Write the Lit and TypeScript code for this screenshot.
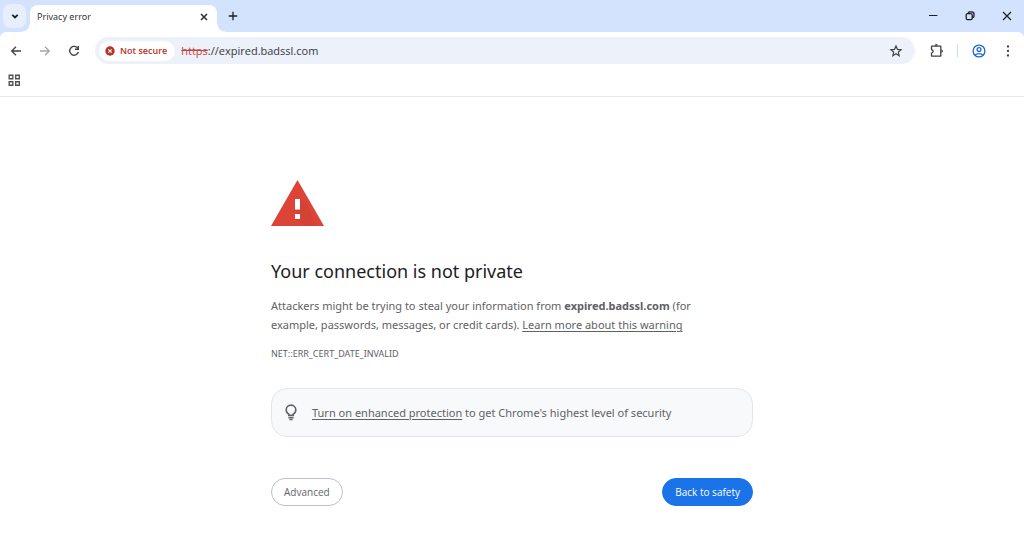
import { LitElement, html, css, svg } from "lit";
import { customElement, property, state } from "lit/decorators.js";

const stroke = (size: number, body: unknown) => html`
  <svg width=${size} height=${size} viewBox="0 0 ${size} ${size}" fill="none" stroke="currentColor" stroke-width="1.5" aria-hidden="true">${body}</svg>
`;

const icons = {
  chevron: stroke(16, svg`<path d="M5.300 6.800 8 9.500l2.700-2.700" stroke-width="1.800"/>`),
  close: stroke(16, svg`<path d="m5 5 6 6m0-6-6 6" stroke-width="1.600"/>`),
  plus: stroke(16, svg`<path d="M8 3.800v8.400M3.800 8h8.400" stroke-width="1.300"/>`),
  minimize: stroke(16, svg`<path d="M4 7.500h8.400" stroke-width="1"/>`),
  restore: stroke(16, svg`<rect x="4.200" y="5.600" width="6" height="6" rx="1.400" stroke-width="1.300"/><path d="M6.200 5.400c0-1 .6-1.600 1.600-1.600h2c1.400 0 2.200.8 2.200 2.200v2c0 1-.6 1.600-1.600 1.600" stroke-width="1.300"/>`),
  closeWindow: stroke(16, svg`<path d="m4 4 8 8m0-8-8 8" stroke-width="1.200"/>`),
  back: stroke(16, svg`<path d="M13 8H4M8 3.700 3.700 8 8 12.300" stroke-width="1.300"/>`),
  forward: stroke(16, svg`<path d="M3 8h9M8 3.700 12.300 8 8 12.300" stroke-width="1.300"/>`),
  reload: stroke(16, svg`<path d="M11.900 5.600A4.400 4.400 0 1 0 12.300 9" stroke-width="1.400"/><path d="M12.300 3v3.300H9" stroke-width="1.400"/>`),
  star: stroke(16, svg`<path d="m8 3 1.450 3.350 3.650.33-2.770 2.400.83 3.560L8 10.750l-3.160 1.890.83-3.560L2.900 6.680l3.650-.33Z" stroke-width="1.200"/>`),
  puzzle: stroke(16, svg`<path d="M3.500 3.200h9.300v9.900H3.500v-3c2.200-.5 2.200-3 0-3.500Z" stroke-width="1.300" stroke-linejoin="round"/><path d="M6.700 2.700a1.600 1.600 0 0 1 3.200 0ZM13.300 6.500a1.600 1.600 0 0 1 0 3.200Z" fill="currentColor" stroke="none"/>`),
  profile: stroke(16, svg`<circle cx="8" cy="8" r="5.900" stroke-width="1.300"/><circle cx="8" cy="6.500" r="1.900" stroke-width="1.300"/><path d="M4 12.200c2.200-2.200 5.800-2.200 8 0" stroke-width="1.300"/>`),
  menu: stroke(16, svg`<g fill="currentColor" stroke="none"><circle cx="8" cy="3.500" r="1.150"/><circle cx="8" cy="8" r="1.150"/><circle cx="8" cy="12.500" r="1.150"/></g>`),
  grid: stroke(16, svg`<path d="M3.200 2.200h3.600v3.600H3.200ZM9.700 2.200h3.600v3.600H9.700ZM3.200 8.700h3.600v3.600H3.200ZM9.700 8.700h3.600v3.600H9.700Z" stroke-width="1.400"/>`),
  unsafe: stroke(10, svg`<circle cx="5" cy="5" r="4.700" fill="currentColor" stroke="none"/><path d="m3.300 3.300 3.400 3.400m0-3.400L3.300 6.700" stroke="#fff" stroke-width="1.100"/>`),
  bulb: stroke(18, svg`<path d="M6.800 11.400v-1.300C5.200 9.200 4.200 7.700 4.200 5.900a4.800 4.800 0 0 1 9.600 0c0 1.800-1 3.300-2.600 4.200v1.300Z" stroke-width="1.600"/><path d="M6.400 13.800h5.200M7.400 15.600h3.200" stroke-width="1.400"/>`),
};

@customElement("icon-button")
class IconButton extends LitElement {
  @property() label = "";
  @property() icon: keyof typeof icons = "close";
  @property({ type: Boolean }) disabled = false;

  static styles = css`
    :host {
      display: inline-flex;
    }
    .button {
      display: grid;
      place-items: center;
      width: 100%;
      min-width: 16px;
      padding: 4px 0;
      border: 0;
      border-radius: inherit;
      background: none;
      color: inherit;
    }
    svg {
      display: block;
    }
  `;

  render() {
    return html`<button class="button" aria-label=${this.label} ?disabled=${this.disabled}>${icons[this.icon]}</button>`;
  }
}

@customElement("browser-chrome")
class BrowserChrome extends LitElement {
  static styles = css`
    :host {
      display: block;
      color: #1f1f1f;
      background: #d3e2fd;
    }
    .strip {
      display: flex;
      align-items: center;
      height: 32px;
      padding: 0 5px 0 3px;
    }
    .search {
      width: 23px;
      border-radius: 8px;
      background: #e7effd;
    }
    .tab {
      position: relative;
      align-self: flex-end;
      box-sizing: border-box;
      display: flex;
      align-items: center;
      justify-content: space-between;
      width: 187px;
      height: 27px;
      margin: 0 8px 0 4px;
      padding: 0 5px 4px 7px;
      border-radius: 8px 8px 0 0;
      background: #fff;
      color: #333;
      font: 9px/16px var(--text-font);
    }
    .tab::before,
    .tab::after {
      content: "";
      position: absolute;
      bottom: 0;
      width: 8px;
      height: 8px;
    }
    .tab::before {
      right: 100%;
      background: radial-gradient(circle at 0 0, transparent 7px, #fff 8px);
    }
    .tab::after {
      left: 100%;
      background: radial-gradient(circle at 100% 0, transparent 7px, #fff 8px);
    }
    .window {
      display: flex;
      gap: 21px;
      margin-left: auto;
      padding-right: 4px;
    }
    .toolbar {
      display: flex;
      align-items: center;
      gap: 13px;
      padding: 5px 8px;
      border-radius: 6px 6px 0 0;
      background: #fff;
      color: #404245;
    }
    .off {
      color: #a5a6a8;
    }
    .address {
      flex: 1;
      display: flex;
      align-items: center;
      box-sizing: border-box;
      height: 27px;
      padding: 0 11px 0 4px;
      border-radius: 14px;
      background: #ecf1fa;
    }
    .security {
      display: flex;
      align-items: center;
      gap: 5px;
      height: 20px;
      margin-right: 6px;
      padding: 0 8px 0 6px;
      border: 0;
      border-radius: 10px;
      background: #fff;
      color: #b93228;
      font: 600 9px/20px var(--ui-font);
    }
    .url {
      flex: 1;
      display: flex;
      align-items: center;
      font-size: 11px;
      line-height: 16px;
    }
    .scheme {
      color: #c7463c;
    }
    .input {
      flex: 1;
      min-width: 0;
      padding: 0;
      border: 0;
      outline: 0;
      background: none;
      color: #36383b;
      font: inherit;
    }
    .extensions {
      display: flex;
      align-items: center;
      gap: 13px;
    }
    .divider {
      width: 1px;
      height: 13px;
      background: #c9dbfa;
    }
    .profile {
      color: #1b66d2;
    }
    .bookmarks {
      display: flex;
      padding: 0 6px 3px;
      border-bottom: 1px solid #e6e8eb;
      background: #fff;
      color: #505255;
    }
  `;

  render() {
    return html`
      <div class="strip">
        <icon-button class="search" icon="chevron" label="Search tabs"></icon-button>
        <div class="tab">
          <span>Privacy error</span>
          <icon-button icon="close" label="Close tab"></icon-button>
        </div>
        <icon-button icon="plus" label="New tab"></icon-button>
        <div class="window">
          <icon-button icon="minimize" label="Minimize"></icon-button>
          <icon-button icon="restore" label="Restore"></icon-button>
          <icon-button icon="closeWindow" label="Close window"></icon-button>
        </div>
      </div>
      <div class="toolbar">
        <icon-button icon="back" label="Back"></icon-button>
        <icon-button class="off" icon="forward" label="Forward" disabled></icon-button>
        <icon-button icon="reload" label="Reload"></icon-button>
        <div class="address">
          <button class="security">${icons.unsafe}Not secure</button>
          <label class="url">
            <s class="scheme">https</s>
            <input class="input" aria-label="Address" value="://expired.badssl.com" />
          </label>
          <icon-button icon="star" label="Bookmark this page"></icon-button>
        </div>
        <div class="extensions">
          <icon-button icon="puzzle" label="Extensions"></icon-button>
          <span class="divider"></span>
          <icon-button class="profile" icon="profile" label="Profile"></icon-button>
          <icon-button icon="menu" label="Menu"></icon-button>
        </div>
      </div>
      <nav class="bookmarks">
        <icon-button icon="grid" label="Apps"></icon-button>
      </nav>
    `;
  }
}

@customElement("privacy-warning")
class PrivacyWarning extends LitElement {
  @state() private host = "expired.badssl.com";

  static styles = css`
    :host {
      display: block;
      box-sizing: border-box;
      width: 100%;
      max-width: 514px;
      margin: 0 auto;
      padding: 83px 16px 40px;
      color: #5f6164;
      font: 11px/19px var(--text-font);
    }
    .sign {
      display: block;
      margin-bottom: 32px;
    }
    .title {
      margin: 0 0 12px;
      color: #202124;
      font-size: 18px;
      font-weight: 400;
      line-height: 26px;
    }
    .text {
      margin: 0 0 10px;
      padding-right: 32px;
    }
    .link {
      color: inherit;
      text-underline-offset: 2px;
    }
    .code {
      font-size: 9px;
    }
    .tip {
      display: flex;
      align-items: center;
      gap: 12px;
      margin: 25px 0 41px;
      padding: 14px 10px;
      border: 1px solid #e4e6ea;
      border-radius: 16px;
      background: #f8f9fb;
    }
    .tip p {
      margin: 0;
    }
    .actions {
      display: flex;
      justify-content: space-between;
    }
    .button {
      padding: 0 12px;
      border: 1px solid #c0c1cb;
      border-radius: 14px;
      background: #fff;
      color: #646669;
      font: 10px/26px var(--ui-font);
    }
    .primary {
      border-color: #1a73e8;
      background: #1a73e8;
      color: #fff;
    }
  `;

  render() {
    return html`
      <svg class="sign" width="53" height="46" viewBox="0 0 53 46" aria-hidden="true">
        <path d="M26.500 0 53 46H0Z" fill="#db4437" />
        <path d="m29 19 9 9 6 18H34l-10-7 5-9Z" fill="#b93a30" opacity=".25" />
        <path d="M24 19h5v10.500h-5ZM24 34h5v5h-5Z" fill="#fff" />
      </svg>
      <h1 class="title">Your connection is not private</h1>
      <p class="text">
        Attackers might be trying to steal your information from <strong>${this.host}</strong> (for
        example, passwords, messages, or credit cards). <a class="link" href="#learn">Learn more about this warning</a>
      </p>
      <div class="code">NET::ERR_CERT_DATE_INVALID</div>
      <div class="tip">
        ${icons.bulb}
        <p><a class="link" href="#protection">Turn on enhanced protection</a> to get Chrome's highest level of security</p>
      </div>
      <div class="actions">
        <button class="button">Advanced</button>
        <button class="button primary">Back to safety</button>
      </div>
    `;
  }
}

@customElement("app-root")
class AppRoot extends LitElement {
  static styles = css`
    :host {
      --ui-font: "Open Sans", "Noto Sans", sans-serif;
      --text-font: "Noto Sans", "Open Sans", sans-serif;
      display: block;
      min-height: 100vh;
      background: #fff;
      font-family: var(--ui-font);
    }
  `;

  render() {
    return html`
      <browser-chrome></browser-chrome>
      <main><privacy-warning></privacy-warning></main>
    `;
  }
}
